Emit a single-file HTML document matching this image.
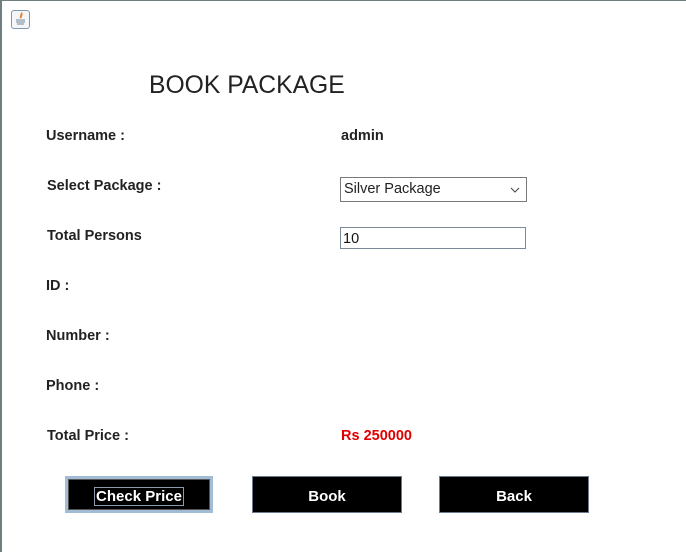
<!DOCTYPE html>
<html><head><style>
body{margin:0;width:686px;height:552px;background:#fff;position:relative;overflow:hidden;font-family:"Liberation Sans",Arial,sans-serif;}
.bl{position:absolute;left:0;top:0;width:2px;height:552px;background:#6e7f80}
.bt{position:absolute;left:0;top:0;width:686px;height:1px;background:#6e7f80}
.ic{position:absolute;left:11px;top:10px;width:19px;height:19px;border:1px solid #7f98b0;border-radius:3px;background:#f4f6f8;box-sizing:border-box}
.t{position:absolute;font-size:24.7px;color:#222;left:149px;top:72px}
.l{position:absolute;font-weight:bold;font-size:14.5px;color:#222}
.sel{position:absolute;left:340px;top:177px;width:187px;height:25px;border:1px solid #7a7a7a;box-sizing:border-box;font-size:14.5px;padding:3px 0 0 3px;color:#222}
.inp{position:absolute;left:340px;top:227px;width:186px;height:22px;border:1px solid #7a8a99;box-sizing:border-box;font-size:14.5px;padding:3px 0 0 2px;color:#111}
.b{position:absolute;top:476px;height:37px;padding-top:3px;background:#000;color:#fff;font-weight:bold;font-size:15px;box-sizing:border-box;border:1px solid #6b7a8c;display:flex;align-items:center;justify-content:center}
</style></head><body>
<div class="bl"></div><div class="bt"></div>
<div class="ic"><svg width="17" height="17" viewBox="0 0 17 17"><path d="M9 2c2 1-1 3 0 5" stroke="#e8812a" stroke-width="2" fill="none"/><path d="M4 9h9M4 11h9M5 13h7" stroke="#6f8597" stroke-width="1"/></svg></div>
<div class="t">BOOK PACKAGE</div>
<div class="l" style="left:46px;top:128px">Username :</div>
<div class="l" style="left:341px;top:128px">admin</div>
<div class="l" style="left:47px;top:178px">Select Package :</div>
<div class="sel">Silver Package<svg style="position:absolute;right:6px;top:9px" width="10" height="6"><path d="M1 1l4 4 4-4" stroke="#444" fill="none"/></svg></div>
<div class="l" style="left:47px;top:228px">Total Persons</div>
<div class="inp">10</div>
<div class="l" style="left:46px;top:278px">ID :</div>
<div class="l" style="left:46px;top:328px">Number :</div>
<div class="l" style="left:46px;top:378px">Phone :</div>
<div class="l" style="left:47px;top:428px">Total Price :</div>
<div class="l" style="left:341px;top:428px;color:#e00000">Rs 250000</div>
<div class="b" style="left:65px;width:148px;border:3px solid #a3bcd6;outline:1px solid #555;outline-offset:-4px"><span style="border:1px solid #8a9aaa;padding:0 1px">Check Price</span></div>
<div class="b" style="left:252px;width:150px">Book</div>
<div class="b" style="left:439px;width:150px">Back</div>
</body></html>
